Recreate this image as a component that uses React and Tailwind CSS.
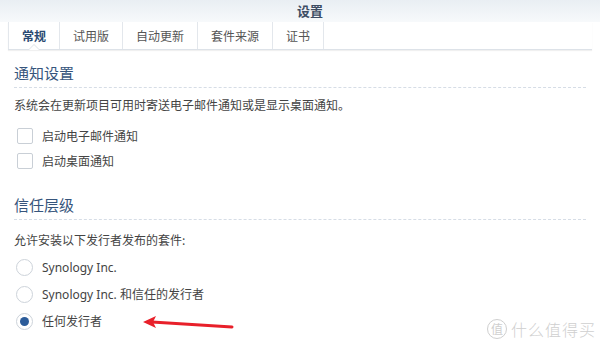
export default function App() {
  const tabs = ["常规", "试用版", "自动更新", "套件来源", "证书"];
  return (
    <div className="relative w-[600px] h-[353px] overflow-hidden bg-white font-['Noto_Sans_CJK_SC',sans-serif] text-[#404040]">
      <div className="h-[22px] bg-gradient-to-b from-[#e9eef3] to-[#f7f9fb] flex items-center justify-center">
        <span className="ml-[20px] text-[13px] font-bold text-[#3d4d63]">设置</span>
      </div>

      <div className="relative mx-[8px] flex h-[28px] border-b border-[#dde2e8] shadow-[0_1px_1px_rgba(0,0,0,0.06)]">
        {tabs.map((t, i) => (
          <div
            key={t}
            className={
              "relative flex items-center px-[13px] text-[12px] border-[#e3e7ec] " +
              (i === 0 ? "border-l border-r font-bold text-[#2a4a72]" : "border-r text-[#555]")
            }
          >
            {t}
            {i === 0 && (
              <span className="absolute left-1/2 -bottom-[1px] -translate-x-1/2 h-0 w-0 border-x-[6px] border-b-[6px] border-x-transparent border-b-[#dde2e8]">
                <span className="absolute left-[-5px] top-[1px] h-0 w-0 border-x-[5px] border-b-[5px] border-x-transparent border-b-white" />
              </span>
            )}
          </div>
        ))}
      </div>

      <div className="px-[14px]">
        <div className="mt-[13px] pb-[4px] text-[15px] leading-[20px] text-[#36557c] border-b border-dashed border-[#d6dde6]">通知设置</div>
        <p className="mt-[8px] text-[12px] leading-[18px] text-[#444]">系统会在更新项目可用时寄送电子邮件通知或是显示桌面通知。</p>
        <div className="mt-[14px] flex flex-col gap-[9px] pl-[3px]">
          {["启动电子邮件通知", "启动桌面通知"].map((l) => (
            <label key={l} className="flex h-[16px] items-center gap-[9px] text-[12px] leading-[16px] text-[#444]">
              <span className="h-[16px] w-[16px] rounded-[2px] border border-[#c9cfd6] bg-white" />
              {l}
            </label>
          ))}
        </div>

        <div className="mt-[26px] pb-[4px] text-[15px] leading-[20px] text-[#36557c] border-b border-dashed border-[#d6dde6]">信任层级</div>
        <p className="mt-[11px] text-[12px] leading-[18px] text-[#444]">允许安装以下发行者发布的套件:</p>
        <div className="mt-[10px] flex flex-col gap-[10px] pl-[2px]">
          {["Synology Inc.", "Synology Inc. 和信任的发行者", "任何发行者"].map((l, i) => (
            <label key={l} className="flex h-[17px] items-center gap-[9px] text-[12px] leading-[17px] text-[#444] font-['Noto_Sans','Noto_Sans_CJK_SC',sans-serif]">
              <span className="flex h-[17px] w-[17px] items-center justify-center rounded-full border border-[#cdd3da] bg-white">
                {i === 2 && <span className="h-[9px] w-[9px] rounded-full bg-[#2c5c9a]" />}
              </span>
              {l}
            </label>
          ))}
        </div>
      </div>

      <svg className="absolute left-[138px] top-[312px]" width="100" height="22" viewBox="0 0 100 22">
        <path d="M94 15 L14 10" stroke="#e8202a" strokeWidth="3" strokeLinecap="round" fill="none" />
        <path d="M5 10 L18 4 L15 10 L18 16 Z" fill="#e8202a" />
      </svg>

      <div className="absolute right-[4px] bottom-[12px] flex items-center gap-[4px] text-[#cfcfcf]">
        <span className="flex h-[20px] w-[20px] items-center justify-center rounded-full border-[1.5px] border-[#cfcfcf] text-[12px]">值</span>
        <span className="text-[16px] tracking-[1px] font-light">什么值得买</span>
      </div>
    </div>
  );
}
